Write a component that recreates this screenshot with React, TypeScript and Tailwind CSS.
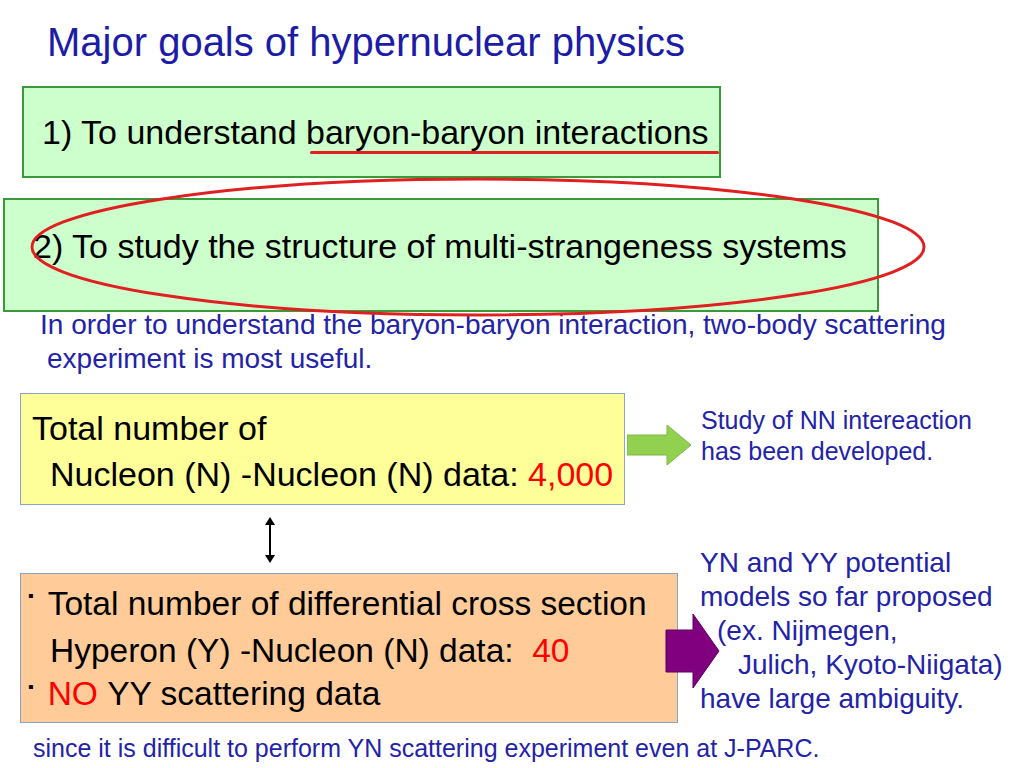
export default function App() {
  return (
    <div className="relative w-[1024px] h-[768px] bg-white overflow-hidden text-black" style={{ fontFamily: '"Liberation Sans", Arial, sans-serif' }}>
      <div className="pt-[21px] pl-[47px] text-[40px] leading-[42px] text-[#1c1ca6]">Major goals of hypernuclear physics</div>

      <div className="ml-[22px] mt-[23px] w-[699px] h-[92px] border-2 border-[#3a9a3a] bg-[#ccffcc] flex items-center pl-[18px] text-[34px] whitespace-nowrap">
        <span>1) To understand <span className="relative">baryon-baryon interactions<span className="absolute left-[4px] right-[-10px] top-[38px] h-[3px] bg-[#e02020] rounded"></span></span></span>
      </div>

      <div className="ml-[3px] mt-[20px] w-[876px] h-[114px] border-2 border-[#3a9a3a] bg-[#ccffcc] flex items-center pl-[28px] pb-[18px] text-[34px] whitespace-nowrap">
        2) To study the structure of multi-strangeness systems
      </div>

      <div className="mt-[-4px] text-[28px] leading-[34px] text-[#2323a8] whitespace-nowrap">
        <div className="pl-[40px]">In order to understand the baryon-baryon interaction, two-body scattering</div>
        <div className="pl-[47px]">experiment is most useful.</div>
      </div>

      <div className="mt-[17px] flex items-start">
        <div className="ml-[20px] w-[605px] h-[112px] border border-[#8aa3c8] bg-[#ffff99] text-[34px] leading-[46px] pt-[11px] whitespace-nowrap">
          <div className="pl-[11px]">Total number of</div>
          <div className="pl-[29px]">Nucleon (N) -Nucleon (N) data: <span className="text-[#ff0000]">4,000</span></div>
        </div>
        <svg width="66" height="40" viewBox="0 0 66 40" className="mt-[32px] ml-[2px]">
          <polygon points="0,10 40,10 40,0 64,20 40,40 40,30 0,30" fill="#92d050" stroke="#7fb843" />
        </svg>
        <div className="ml-[8px] mt-[12px] text-[25px] leading-[31px] text-[#2323a8] whitespace-nowrap">
          <div>Study of NN intereaction</div>
          <div>has been developed.</div>
        </div>
      </div>

      <div className="h-[68px] pl-[265px] pt-[12px]">
        <svg width="10" height="46" viewBox="0 0 10 46">
          <line x1="5" y1="3" x2="5" y2="43" stroke="#000" strokeWidth="2" />
          <polygon points="5,0 0,8 10,8" fill="#000" />
          <polygon points="5,46 0,38 10,38" fill="#000" />
        </svg>
      </div>

      <div className="flex items-start">
        <div className="ml-[20px] w-[658px] h-[150px] border border-[#8aa3c8] bg-[#ffcc99] text-[33.5px] leading-[47px] pt-[6px] whitespace-nowrap">
          <div className="pl-[7px] flex"><span className="text-[16px] leading-[32px] mr-[14px] font-bold">▪</span>Total number of differential cross section</div>
          <div className="pl-[29px]">Hyperon (Y) -Nucleon (N) data:&nbsp; <span className="text-[#ff0000]">40</span></div>
          <div className="pl-[7px] flex leading-[40px]"><span className="text-[16px] leading-[26px] mr-[14px] font-bold">▪</span><span className="text-[#ff0000]">NO</span>&nbsp;YY scattering data</div>
        </div>
        <svg width="56" height="76" viewBox="0 0 56 76" className="ml-[-13px] mt-[40px]">
          <polygon points="1,17 28,17 28,1 54,38 28,75 28,59 1,59" fill="#800080" stroke="#5a005a" />
        </svg>
        <div className="ml-[-21px] mt-[-27px] text-[28px] leading-[34px] text-[#2323a8] whitespace-nowrap">
          <div>YN and YY potential</div>
          <div>models so far proposed</div>
          <div className="pl-[17px]">(ex. Nijmegen,</div>
          <div className="pl-[38px]">Julich, Kyoto-Niigata)</div>
          <div>have large ambiguity.</div>
        </div>
      </div>

      <div className="mt-[12px] pl-[33px] text-[25px] leading-[26px] text-[#2323a8] whitespace-nowrap">
        since it is difficult to perform YN scattering experiment even at J-PARC.
      </div>

      <svg className="absolute left-0 top-0 pointer-events-none" width="1024" height="768">
        <ellipse cx="478" cy="247" rx="446" ry="68" fill="none" stroke="#e02020" strokeWidth="3" />
      </svg>
    </div>
  );
}
